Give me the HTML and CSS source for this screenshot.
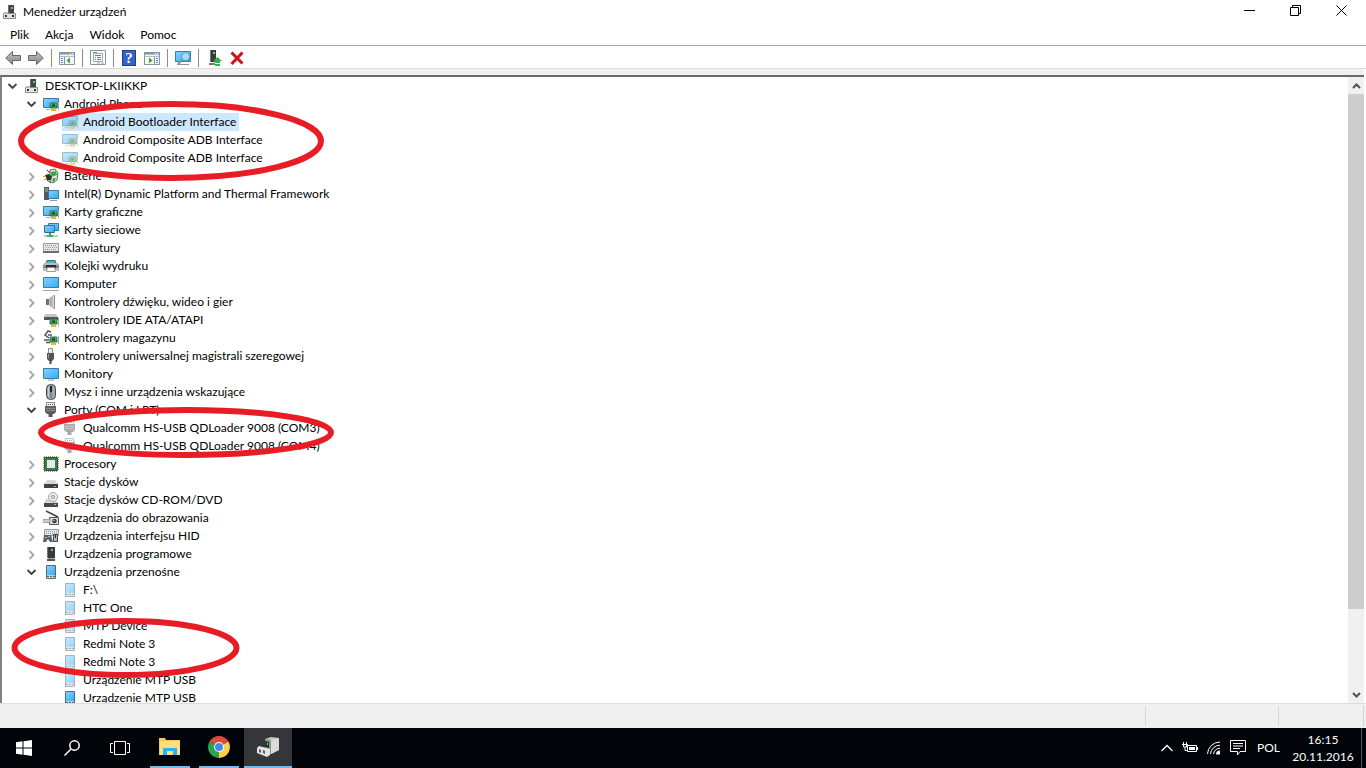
FILE: index.html
```html
<!DOCTYPE html>
<html lang="pl">
<head>
  <meta charset="UTF-8" />
  <meta name="viewport" content="width=device-width, initial-scale=1.0"/>
  <title>Menedżer urządzeń</title>
  <link rel="stylesheet" href="styles.css">
</head>
<body>
  <!-- icon set -->
  <svg class="sprite" aria-hidden="true">
    <defs>
      <linearGradient id="blue" x1="0" y1="0" x2="1" y2="1">
        <stop offset="0" stop-color="#86d4ff"/><stop offset="1" stop-color="#35a8f5"/>
      </linearGradient>
      <linearGradient id="steel" x1="0" y1="0" x2="1" y2="0">
        <stop offset="0" stop-color="#8a8a8a"/><stop offset="1" stop-color="#dcdcdc"/>
      </linearGradient>
      <linearGradient id="arrow" x1="0" y1="0" x2="0" y2="1">
        <stop offset="0" stop-color="#c4c4c4"/><stop offset="1" stop-color="#858585"/>
      </linearGradient>
    </defs>
    <symbol id="card" viewBox="0 0 10 9">
      <path d="M1 1h7v5H1z" fill="#3f9d66" stroke="#2a6e47"/>
      <path d="M3 2.500h3v2H3z" fill="#17452b"/><path d="M1.500 2h1M6.500 2h1" stroke="#8fd0a4"/>
      <path d="M9.500 0v8" stroke="#a9a9a9"/><path d="M2 7h5v2H2z" fill="#f0b429"/>
    </symbol>
    <symbol id="computer-root" viewBox="0 0 16 16">
      <path d="M6 1h6v9H6z" fill="#454545"/><path d="M6 1h1v9H6z" fill="#6e6e6e"/><path d="M9 3h2v2H9z" fill="#4fd55c"/>
      <path d="M1.500 9.500h12v5h-12z" fill="#e3e3e3" stroke="#8c8c8c"/>
      <path d="M3 11h2v2H3zM10 11h2v2h-2z" fill="#333"/><path d="M2 8h4v2H2z" fill="#b7b7b7"/>
    </symbol>
    <symbol id="display-card" viewBox="0 0 16 16">
      <path d="M.5 2.500h15v9H.5z" fill="url(#blue)" stroke="#3a7ca8"/><path d="M3 13.500h4" stroke="#9aaab5"/>
      <use href="#card" x="6" y="6" width="10" height="9"/>
    </symbol>
    <symbol id="battery" viewBox="0 0 16 16">
      <path d="M7 2l5-1 3 4-1 7-4 3-3-2z" fill="#dfe9df" stroke="#5d6b5d"/>
      <path d="M8 4l5-1 1 4-6 2z" fill="#3fa64b"/><path d="M10 10l3 0-2 4-2-1z" fill="#3fa64b"/>
      <path d="M2 7l4-1 3 3-1 3-4 0z" fill="#2c332b"/><path d="M0 8.500h3M1 11.500h3" stroke="#c9a227"/><path d="M4 2l3 3M4 12l4 3" stroke="#333"/>
    </symbol>
    <symbol id="tower" viewBox="0 0 16 16">
      <path d="M1 1h5v13H1z" fill="#555b60"/><path d="M2 3h3M2 5h3" stroke="#b8c0c5"/>
      <path d="M5.500 4.500h10v8h-10z" fill="url(#blue)" stroke="#3a7ca8"/><path d="M7 14.500h7" stroke="#8c9aa3"/>
    </symbol>
    <symbol id="network" viewBox="0 0 16 16">
      <path d="M5.500 1.500h10v7h-10z" fill="url(#blue)" stroke="#3a7ca8"/><path d="M1.500 3.500h10v7h-10z" fill="url(#blue)" stroke="#2f7099"/>
      <path d="M6 11h2v1H6z" fill="#666"/><path d="M1 14h14" stroke="#a5dfb0" stroke-width="2"/><path d="M4 13h6v2H4zM6 12h2v3H6z" fill="#3db45a"/>
    </symbol>
    <symbol id="keyboard" viewBox="0 0 16 16">
      <path d="M.5 3.500h15v9H.5z" fill="#e6e6e6" stroke="#9b9b9b"/><path d="M0 11h16v2H0z" fill="#6a6d71"/>
      <path d="M2 5.500h12M3 7.500h11M2 9.500h12" stroke="#8e959b" stroke-dasharray="1 1"/>
    </symbol>
    <symbol id="printer" viewBox="0 0 16 16">
      <path d="M4 2.500h8l1 3H3z" fill="#49b6c9" stroke="#2c6e78"/><path d="M1 5h14l1 2v6H0V7z" fill="#bcbcbc"/><path d="M0 7h16v3H0z" fill="#8a8a8a"/>
      <path d="M3 7h10v3H3z" fill="#2d2d2d"/><path d="M4.500 9.500h7l1 4h-9z" fill="#fff" stroke="#999"/>
    </symbol>
    <symbol id="pc" viewBox="0 0 16 16">
      <path d="M.5 1.500h15v10H.5z" fill="url(#blue)" stroke="#3a7ca8"/><path d="M0 14.500h16" stroke="#9aa7b0"/>
    </symbol>
    <symbol id="speaker" viewBox="0 0 16 16">
      <path d="M3 5h3v6H3z" fill="#6c6f73"/><path d="M6 5l4-4h1v14h-1l-4-4z" fill="url(#steel)"/><path d="M11.500 1v14" stroke="#8b8b8b"/><path d="M6.500 5v6" stroke="#ccc"/>
    </symbol>
    <symbol id="ide" viewBox="0 0 16 16">
      <path d="M2 2h11l2 3v3H1V5z" fill="#c4c4c4"/><path d="M1 5h14v3H1z" fill="#555"/><use href="#card" x="6" y="6" width="10" height="9"/>
    </symbol>
    <symbol id="storage" viewBox="0 0 16 16">
      <path d="M8 2L5 1 2 5l4 3M5 5h4" fill="none" stroke="#555" stroke-width="1.500"/><path d="M1 10h5M3 12.500h4" stroke="#555" stroke-width="1.500"/>
      <use href="#card" x="6" y="6" width="10" height="9"/>
    </symbol>
    <symbol id="usb" viewBox="0 0 16 16">
      <path d="M5.500.5h4v5h-4z" fill="#eee" stroke="#888"/><path d="M4 5h7v6l-2 2H6l-2-2z" fill="#555"/><path d="M7.500 12v4" stroke="#444" stroke-width="2"/><path d="M5.500 6v4" stroke="#999"/>
    </symbol>
    <symbol id="monitor" viewBox="0 0 16 16">
      <path d="M.5 2.500h15v10H.5z" fill="url(#blue)" stroke="#3a7ca8"/><path d="M5 14h6" stroke="#8d9ba5"/>
    </symbol>
    <symbol id="mouse" viewBox="0 0 16 16">
      <rect x="3.500" y=".5" width="9" height="15" rx="4" fill="#9aa8b4" stroke="#42474c"/><path d="M5.500 3v10" stroke="#c4d0da"/><rect x="7" y="2" width="2" height="6" fill="#20252a"/><path d="M8 8v6" stroke="#59636b"/>
    </symbol>
    <symbol id="port" viewBox="0 0 16 16">
      <path d="M3.500.5h8v4h-8z" fill="#f0f0f0" stroke="#888"/><path d="M5 2h1v1H5zM7 2h1v1H7zM9 2h1v1H9z" fill="#555"/>
      <path d="M2 4h11v6l-2 2H4l-2-2z" fill="#606060"/><path d="M3 6.500h9M3 8.500h9" stroke="#8c8c8c"/><path d="M7.500 11v4" stroke="#555" stroke-width="4"/>
    </symbol>
    <symbol id="cpu" viewBox="0 0 16 16">
      <path d="M1.500 1.500h13v13h-13z" fill="#3c7a57" stroke="#285a3e"/><path d="M1 .5h14M1 15.500h14M.5 1v14M15.500 1v14" stroke="#a99c45" stroke-dasharray="1 1"/><path d="M4 4h8v8H4z" fill="#e4ece8"/>
    </symbol>
    <symbol id="disk" viewBox="0 0 16 16">
      <path d="M4 6h8l3 4H1z" fill="#d8d8d8"/><path d="M1 10h14v4H1z" fill="#424242"/><path d="M11 12h2v1h-2z" fill="#62e36c"/>
    </symbol>
    <symbol id="cdrom" viewBox="0 0 16 16">
      <path d="M3 7h9l3 4H1z" fill="#d4d4d4"/>
      <circle cx="10" cy="5" r="4.500" fill="#ededed" stroke="#a5a5a5"/><circle cx="10" cy="5" r="1.500" fill="#fff" stroke="#888"/>
      <path d="M1 11h14v4H1z" fill="#4a4a4a"/><path d="M11 12h2v1h-2z" fill="#62e36c"/>
    </symbol>
    <symbol id="imaging" viewBox="0 0 16 16">
      <path d="M3 1l12 6" stroke="#444" stroke-width="1.500"/><path d="M6.500 7.500h9v7h-9z" fill="#dcdcdc" stroke="#555"/><path d="M0 9.500h7v3H0z" fill="#cdcdcd" stroke="#777" stroke-width=".6"/>
      <circle cx="11.500" cy="11" r="2.300" fill="#3a4046"/><circle cx="11" cy="10.500" r=".8" fill="#9cc7e8"/>
    </symbol>
    <symbol id="hid" viewBox="0 0 16 16">
      <path d="M1.500 1.500h14v6h-14z" fill="#e6e6e6" stroke="#9b9b9b"/><path d="M3 3.500h11M3 5.500h11" stroke="#8e959b" stroke-dasharray="1 1"/>
      <path d="M1 7h7l2 7H7l-2-3-2 3H0z" fill="#5b6268"/><path d="M2 9h2v1H2zM5 8h2v1H5z" fill="#6fc4ff"/><path d="M10.500 6.500h4v7h-4z" fill="#aeb9c2" stroke="#444"/><path d="M12.500 7v3" stroke="#222"/>
    </symbol>
    <symbol id="software" viewBox="0 0 16 16">
      <path d="M4 1h8v11H4z" fill="#3b3b3b"/><path d="M4 1h1v11H4z" fill="#777"/><path d="M8 3h2v2H8z" fill="#52e05f"/><path d="M5 12h6v1H5z" fill="#a0a0a0"/><path d="M4 13h8v2H4z" fill="#555"/>
    </symbol>
    <symbol id="portable" viewBox="0 0 16 16">
      <path d="M3.500 1.500h9v13h-9z" fill="#c6ced4" stroke="#52697a"/><path d="M4 2h8v9H4z" fill="url(#blue)"/><path d="M4 12.500h8" stroke="#59656f" stroke-dasharray="2 1"/>
    </symbol>
    <symbol id="closed" viewBox="0 0 16 16"><path d="M6.500 5l4 4-4 4" fill="none" stroke="#a6a6a6" stroke-width="1.800"/></symbol>
    <symbol id="open" viewBox="0 0 16 16"><path d="M4.500 6l4 4 4-4" fill="none" stroke="#404040" stroke-width="1.800"/></symbol>
    <symbol id="window" viewBox="0 0 16 16">
      <path d="M.5 2.500h15v12H.5z" fill="#f4f6f7" stroke="#8694a0"/><path d="M0 3.500h16" stroke="#8694a0" stroke-width="2"/><path d="M11 3.500h1M13 3.500h1" stroke="#fff"/><path d="M1 6.500h14" stroke="#b4bec6"/>
    </symbol>
  </svg>

  <main class="window">
    <header class="titlebar">
      <svg class="icon"><use href="#computer-root"/></svg>
      <h1>Menedżer urządzeń</h1>
      <div class="controls">
        <button type="button" aria-label="Minimalizuj"><svg width="11" height="11"><path d="M0 5.500h11" stroke="#000"/></svg></button>
        <button type="button" aria-label="Przywróć"><svg width="11" height="11"><path d="M.5 2.500h8v8h-8zM2.500 2.500v-2h8v8h-2" fill="none" stroke="#000"/></svg></button>
        <button type="button" aria-label="Zamknij"><svg width="11" height="11"><path d="M.5.5l10 10M10.500.5l-10 10" stroke="#000"/></svg></button>
      </div>
    </header>

    <nav class="menu">
      <button type="button">Plik</button>
      <button type="button">Akcja</button>
      <button type="button">Widok</button>
      <button type="button">Pomoc</button>
    </nav>

    <div class="toolbar">
      <button type="button" aria-label="Wstecz"><svg class="icon" viewBox="0 0 16 16"><path d="M.7 8L7.500 1.500v4h8v5h-8v4z" fill="url(#arrow)" stroke="#666"/></svg></button>
      <button type="button" aria-label="Dalej"><svg class="icon" viewBox="0 0 16 16"><path d="M15.300 8L8.500 1.500v4h-8v5h8v4z" fill="url(#arrow)" stroke="#666"/></svg></button>
      <span class="sep"></span>
      <button type="button" aria-label="Pokaż drzewo konsoli"><svg class="icon" viewBox="0 0 16 16"><use href="#window"/><path d="M5.500 7v7" stroke="#8694a0"/><path d="M2 8.500h2M2 10.500h2M2 12.500h2" stroke="#4a86c0"/><path d="M11 7.500v6L7.500 10.500z" fill="#35a83c"/></svg></button>
      <span class="sep"></span>
      <button type="button" aria-label="Właściwości"><svg class="icon" viewBox="0 0 16 16"><path d="M.5.5h15v14H.5z" fill="#fafafa" stroke="#8694a0"/><path d="M3.500 3.500h9v8h-9z" fill="#fff" stroke="#9daab4"/><path d="M3 2.500h4" stroke="#8694a0"/><path d="M5 5.500h6M5 7.500h1M7 7.500h4M5 9.500h1M7 9.500h4" stroke="#6d7b86"/><path d="M7 13h3M11 13h3" stroke="#9daab4"/></svg></button>
      <span class="sep"></span>
      <button type="button" class="help" aria-label="Pomoc">?</button>
      <button type="button" aria-label="Okienko akcji"><svg class="icon" viewBox="0 0 16 16"><use href="#window"/><path d="M10.500 7v7" stroke="#8694a0"/><path d="M12 8.500h2M12 10.500h2M12 12.500h2" stroke="#4a86c0"/><path d="M5 7.500v6l3.500-3z" fill="#35a83c"/></svg></button>
      <span class="sep"></span>
      <button type="button" aria-label="Skanuj w poszukiwaniu zmian"><svg class="icon" viewBox="0 0 16 16"><path d="M.5 1.500h15v10H.5z" fill="url(#blue)" stroke="#3a7ca8"/><path d="M2 14.500h12" stroke="#8694a0"/><circle cx="10.500" cy="6.500" r="4" fill="#a5dcff" stroke="#6d97b3"/><path d="M8 9.500l-5 4.500" stroke="#7b94a6" stroke-width="2"/></svg></button>
      <span class="sep"></span>
      <button type="button" aria-label="Aktualizuj sterownik"><svg class="icon" viewBox="0 0 16 16"><path d="M4 0h6v12H4z" fill="#3b3b3b"/><path d="M4 0h1v12H4z" fill="#777"/><path d="M7 2h2v2H7z" fill="#52e05f"/><path d="M3 13h6v2H3z" fill="#777"/><path d="M11.500 7L16 11h-2v2H9v-2H7zM9 14h5v2H9z" fill="#2fb344"/></svg></button>
      <button type="button" aria-label="Odinstaluj"><svg class="icon" viewBox="0 0 16 16"><path d="M2.500 2.500l11 11M13.500 2.500L2.500 14" stroke="#d40f1c" stroke-width="3"/></svg></button>
    </div>

    <section class="pane">
      <ul class="tree" role="tree">
        <li class="row"><button type="button" aria-label="Zwiń"><svg class="icon"><use href="#open"/></svg></button><svg class="icon"><use href="#computer-root"/></svg><span>DESKTOP-LKIIKKP</span></li>
        <li class="row l1"><button type="button" aria-label="Zwiń"><svg class="icon"><use href="#open"/></svg></button><svg class="icon"><use href="#display-card"/></svg><span>Android Phone</span></li>
        <li class="row l2 hidden selected"><svg class="icon"><use href="#display-card"/></svg><span>Android Bootloader Interface</span></li>
        <li class="row l2 hidden"><svg class="icon"><use href="#display-card"/></svg><span>Android Composite ADB Interface</span></li>
        <li class="row l2 hidden"><svg class="icon"><use href="#display-card"/></svg><span>Android Composite ADB Interface</span></li>
        <li class="row l1"><button type="button" aria-label="Rozwiń"><svg class="icon"><use href="#closed"/></svg></button><svg class="icon"><use href="#battery"/></svg><span>Baterie</span></li>
        <li class="row l1"><button type="button" aria-label="Rozwiń"><svg class="icon"><use href="#closed"/></svg></button><svg class="icon"><use href="#tower"/></svg><span>Intel(R) Dynamic Platform and Thermal Framework</span></li>
        <li class="row l1"><button type="button" aria-label="Rozwiń"><svg class="icon"><use href="#closed"/></svg></button><svg class="icon"><use href="#display-card"/></svg><span>Karty graficzne</span></li>
        <li class="row l1"><button type="button" aria-label="Rozwiń"><svg class="icon"><use href="#closed"/></svg></button><svg class="icon"><use href="#network"/></svg><span>Karty sieciowe</span></li>
        <li class="row l1"><button type="button" aria-label="Rozwiń"><svg class="icon"><use href="#closed"/></svg></button><svg class="icon"><use href="#keyboard"/></svg><span>Klawiatury</span></li>
        <li class="row l1"><button type="button" aria-label="Rozwiń"><svg class="icon"><use href="#closed"/></svg></button><svg class="icon"><use href="#printer"/></svg><span>Kolejki wydruku</span></li>
        <li class="row l1"><button type="button" aria-label="Rozwiń"><svg class="icon"><use href="#closed"/></svg></button><svg class="icon"><use href="#pc"/></svg><span>Komputer</span></li>
        <li class="row l1"><button type="button" aria-label="Rozwiń"><svg class="icon"><use href="#closed"/></svg></button><svg class="icon"><use href="#speaker"/></svg><span>Kontrolery dźwięku, wideo i gier</span></li>
        <li class="row l1"><button type="button" aria-label="Rozwiń"><svg class="icon"><use href="#closed"/></svg></button><svg class="icon"><use href="#ide"/></svg><span>Kontrolery IDE ATA/ATAPI</span></li>
        <li class="row l1"><button type="button" aria-label="Rozwiń"><svg class="icon"><use href="#closed"/></svg></button><svg class="icon"><use href="#storage"/></svg><span>Kontrolery magazynu</span></li>
        <li class="row l1"><button type="button" aria-label="Rozwiń"><svg class="icon"><use href="#closed"/></svg></button><svg class="icon"><use href="#usb"/></svg><span>Kontrolery uniwersalnej magistrali szeregowej</span></li>
        <li class="row l1"><button type="button" aria-label="Rozwiń"><svg class="icon"><use href="#closed"/></svg></button><svg class="icon"><use href="#monitor"/></svg><span>Monitory</span></li>
        <li class="row l1"><button type="button" aria-label="Rozwiń"><svg class="icon"><use href="#closed"/></svg></button><svg class="icon"><use href="#mouse"/></svg><span>Mysz i inne urządzenia wskazujące</span></li>
        <li class="row l1"><button type="button" aria-label="Zwiń"><svg class="icon"><use href="#open"/></svg></button><svg class="icon"><use href="#port"/></svg><span>Porty (COM i LPT)</span></li>
        <li class="row l2 hidden"><svg class="icon"><use href="#port"/></svg><span>Qualcomm HS-USB QDLoader 9008 (COM3)</span></li>
        <li class="row l2 hidden"><svg class="icon"><use href="#port"/></svg><span>Qualcomm HS-USB QDLoader 9008 (COM4)</span></li>
        <li class="row l1"><button type="button" aria-label="Rozwiń"><svg class="icon"><use href="#closed"/></svg></button><svg class="icon"><use href="#cpu"/></svg><span>Procesory</span></li>
        <li class="row l1"><button type="button" aria-label="Rozwiń"><svg class="icon"><use href="#closed"/></svg></button><svg class="icon"><use href="#disk"/></svg><span>Stacje dysków</span></li>
        <li class="row l1"><button type="button" aria-label="Rozwiń"><svg class="icon"><use href="#closed"/></svg></button><svg class="icon"><use href="#cdrom"/></svg><span>Stacje dysków CD-ROM/DVD</span></li>
        <li class="row l1"><button type="button" aria-label="Rozwiń"><svg class="icon"><use href="#closed"/></svg></button><svg class="icon"><use href="#imaging"/></svg><span>Urządzenia do obrazowania</span></li>
        <li class="row l1"><button type="button" aria-label="Rozwiń"><svg class="icon"><use href="#closed"/></svg></button><svg class="icon"><use href="#hid"/></svg><span>Urządzenia interfejsu HID</span></li>
        <li class="row l1"><button type="button" aria-label="Rozwiń"><svg class="icon"><use href="#closed"/></svg></button><svg class="icon"><use href="#software"/></svg><span>Urządzenia programowe</span></li>
        <li class="row l1"><button type="button" aria-label="Zwiń"><svg class="icon"><use href="#open"/></svg></button><svg class="icon"><use href="#portable"/></svg><span>Urządzenia przenośne</span></li>
        <li class="row l2 hidden"><svg class="icon"><use href="#portable"/></svg><span>F:\</span></li>
        <li class="row l2 hidden"><svg class="icon"><use href="#portable"/></svg><span>HTC One</span></li>
        <li class="row l2 hidden"><svg class="icon"><use href="#portable"/></svg><span>MTP Device</span></li>
        <li class="row l2 hidden"><svg class="icon"><use href="#portable"/></svg><span>Redmi Note 3</span></li>
        <li class="row l2 hidden"><svg class="icon"><use href="#portable"/></svg><span>Redmi Note 3</span></li>
        <li class="row l2 hidden"><svg class="icon"><use href="#portable"/></svg><span>Urządzenie MTP USB</span></li>
        <li class="row l2"><svg class="icon"><use href="#portable"/></svg><span>Urządzenie MTP USB</span></li>
      </ul>

      <div class="scrollbar">
        <button type="button" aria-label="W górę"><svg width="9" height="6"><path d="M1 5l3.500-3.500L8 5" fill="none" stroke="#505050" stroke-width="2"/></svg></button>
        <div class="track"><div class="thumb"></div></div>
        <button type="button" aria-label="W dół"><svg width="9" height="6"><path d="M1 1l3.500 3.500L8 1" fill="none" stroke="#505050" stroke-width="2"/></svg></button>
      </div>

      <!-- hand-drawn marks over the tree -->
      <svg class="marks" width="340" height="626" fill="none" stroke="#e81c24" stroke-width="6">
        <ellipse cx="169" cy="64" rx="150" ry="37"/>
        <ellipse cx="184" cy="355.500" rx="145" ry="22.500"/>
        <ellipse cx="123.500" cy="571" rx="111" ry="27"/>
      </svg>
    </section>

    <footer class="status"><span></span><span></span><span></span></footer>
  </main>

  <div class="taskbar">
    <div class="apps">
      <button type="button" aria-label="Start"><svg width="16" height="16" fill="#fff"><path d="M0 2.300L6.500 1.300v6.200H0zM7.500 1.200L16 0v7.500H7.500zM0 8.500h6.500v6.200L0 13.700zM7.500 8.500H16V16l-8.500-1.200z"/></svg></button>
      <button type="button" aria-label="Szukaj"><svg width="16" height="16" fill="none" stroke="#fff" stroke-width="1.500"><circle cx="10.500" cy="5.500" r="4.700"/><path d="M7 9L.5 15.500"/></svg></button>
      <button type="button" aria-label="Widok zadań"><svg width="20" height="14" fill="none" stroke="#fff"><path d="M4.500.5h11v13h-11zM3 2.500H.5v9H3M17 2.500h2.500v9H17"/></svg></button>
      <button type="button" class="running" aria-label="Eksplorator plików"><svg width="22" height="20"><path d="M0 1h6l1 2h14v15H0z" fill="#f3c94f"/><path d="M1 4h20v14H1z" fill="#fddf80"/><path d="M4 18v-7h14v7h-4v-4H8v4z" fill="#2cb2e8"/></svg></button>
      <button type="button" class="running" aria-label="Google Chrome">
        <svg width="22" height="22"><path d="M11 11L1.500 5.500A11 11 0 0 1 20.500 5.500z" fill="#dd4b3e"/><path d="M11 11L1.500 5.500A11 11 0 0 0 11 22z" fill="#2ba24c"/><path d="M11 11l0 11A11 11 0 0 0 20.500 5.500z" fill="#fdd04b"/><path d="M11 6h9.800a11 11 0 0 0-.3-.5l-9.500-2z" fill="#dd4b3e"/><path d="M6.500 13.500L11 16l-3 5.500z" fill="#2ba24c"/><circle cx="11" cy="11" r="5" fill="#fff"/><circle cx="11" cy="11" r="4" fill="#4a86ee"/></svg>
      </button>
      <button type="button" class="active" aria-label="Menedżer urządzeń"><svg width="22" height="20"><path d="M8 2l6-2 8 1v12l-8 4-6-3z" fill="#c4c4c4"/><path d="M8 2l6 1v13l-6-2z" fill="#8f8f8f"/><path d="M14 3l8-2v12l-8 4z" fill="#dadada"/><path d="M8 4l4 1v6l-4-1z" fill="#1d3a22"/><path d="M10 6h1v2h-1z" fill="#5be56b"/><path d="M0 11l2-2 11 3v6l-3 2-10-4z" fill="#e2e2e2"/><path d="M2 12l2 1v3l-2-1zM6 13l2 1v3l-2-1z" fill="#555"/></svg></button>
    </div>
    <div class="tray">
      <button type="button" aria-label="Ukryte ikony"><svg width="12" height="8"><path d="M.5 7L6 1.500 11.500 7" fill="none" stroke="#fff" stroke-width="1.300"/></svg></button>
      <button type="button" aria-label="Bateria"><svg width="16" height="12" fill="none" stroke="#fff"><path d="M5.500 3.500h9v6h-9z"/><path d="M7 5h6v3H7z" fill="#fff" stroke="none"/><path d="M1.500 0v2M4.500 0v2M0 2.500h6M1.500 3v2h3V3M3 5v3.500h2M15.500 5v3"/></svg></button>
      <button type="button" aria-label="Sieć"><svg width="14" height="14" fill="none" stroke="#fff"><path d="M.5 13A12.500 12.500 0 0 1 13 1M3.500 13A9.500 9.500 0 0 1 13 4.200M6.500 13A6.500 6.500 0 0 1 13 7.200"/><path d="M9 13.500a4 4 0 0 1 4-4v4z" fill="#fff" stroke="none"/></svg></button>
      <button type="button" aria-label="Powiadomienia"><svg width="16" height="16" fill="none" stroke="#fff"><path d="M.5.5h15v11H10L7.500 15v-3.500h-7zM3 3.500h10M3 6h10M3 8.500h7"/></svg></button>
      <button type="button" class="lang">POL</button>
      <button type="button" class="clock"><time>16:15</time><span>20.11.2016</span></button>
      <span class="desktop"></span>
    </div>
  </div>
</body>
</html>
```
FILE: styles.css
```css
* {
  box-sizing: border-box;
}

body {
  margin: 0;
  height: 100vh;
  display: flex;
  flex-direction: column;
  overflow: hidden;
  font-family: Lato, "Segoe UI", sans-serif;
  font-size: 12px;
  line-height: 18px;
  color: #000;
  background: #fff;
}

button {
  display: flex;
  align-items: center;
  justify-content: center;
  flex: none;
  margin: 0;
  padding: 0;
  border: none;
  background: none;
  font: inherit;
  color: inherit;
}

svg {
  display: block;
  flex: none;
}

.sprite {
  position: absolute;
  width: 0;
  height: 0;
}

.icon {
  width: 16px;
  height: 16px;
}

.window {
  flex: 1;
  min-height: 0;
  display: flex;
  flex-direction: column;
}

.titlebar {
  display: flex;
  align-items: center;
  gap: 5px;
  height: 24px;
  padding-left: 2px;
}

.titlebar h1 {
  flex: 1;
  margin: 0;
  font-size: 12px;
  font-weight: normal;
}

.controls {
  display: flex;
  height: 20px;
  align-self: flex-start;
  padding-right: 2px;
}

.controls button {
  width: 46px;
}

.menu {
  display: flex;
  height: 22px;
  gap: 16px;
  padding-left: 10px;
  border-bottom: 1px solid #a9a9a9;
}

.toolbar {
  display: flex;
  align-items: center;
  gap: 7px;
  height: 23px;
  padding: 2px 0 0 5px;
  border-bottom: 1px solid #dcdcdc;
}

.sep {
  width: 1px;
  height: 18px;
  background: #8c8c8c;
}

.toolbar .help {
  width: 14px;
  height: 16px;
  margin: 0 1px;
  border: 1px solid #1d3c8c;
  background: #3a62c4;
  color: #fff;
  font-family: "Liberation Serif", serif;
  font-size: 15px;
  font-weight: bold;
}

.pane {
  position: relative;
  flex: 1;
  min-height: 0;
  display: flex;
  margin: 6px 2px 0 0;
  border-left: 2px solid #828282;
  border-top: 2px solid #696969;
  box-shadow: 0 -6px 0 #f0f0f0;
}

.tree {
  flex: 1;
  margin: 0;
  padding: 0;
  list-style: none;
  overflow: hidden;
}

.row {
  display: flex;
  align-items: center;
  width: fit-content;
  height: 18px;
  margin-left: 2px;
}

.row button {
  margin-right: 4px;
}

.row span {
  padding: 0 3px 0 5px;
  white-space: nowrap;
}

.l1 {
  margin-left: 21px;
}

.l2 {
  margin-left: 60px;
}

.hidden .icon {
  opacity: 0.5;
}

.selected {
  background: #cce8ff;
}

.scrollbar {
  width: 16px;
  display: flex;
  flex-direction: column;
  background: #f0f0f0;
}

.scrollbar button {
  height: 17px;
}

.track {
  flex: 1;
}

.thumb {
  height: 87%;
  background: #cdcdcd;
}

.marks {
  position: absolute;
  left: 0;
  top: 0;
  pointer-events: none;
}

.status {
  display: flex;
  justify-content: flex-end;
  height: 25px;
  padding: 2px 2px 2px 0;
  border-top: 1px solid #dcdcdc;
  background: #f0f0f0;
}

.status span {
  width: 133px;
  border-right: 1px solid #d4d4d4;
}

.status span:last-child {
  width: 85px;
}

.taskbar {
  display: flex;
  justify-content: space-between;
  height: 40px;
  background: #010408;
  color: #fff;
}

.apps {
  display: flex;
}

.apps button {
  width: 48px;
  height: 40px;
}

.apps .running {
  width: 40px;
  margin-left: 6px;
  border-bottom: 2px solid #76b9ed;
}

.apps .running + .running {
  margin-left: 9px;
  margin-right: 5px;
}

.apps .active {
  background: #35363a;
  border-bottom: 2px solid #76b9ed;
}

.tray {
  display: flex;
  align-items: center;
  gap: 9px;
}

.tray .lang {
  margin: 0 5px 0 2px;
}

.tray .clock {
  flex-direction: column;
  width: 58px;
  line-height: 17px;
}

.desktop {
  width: 5px;
  height: 40px;
  border-left: 1px solid #5a5c5e;
}
```
